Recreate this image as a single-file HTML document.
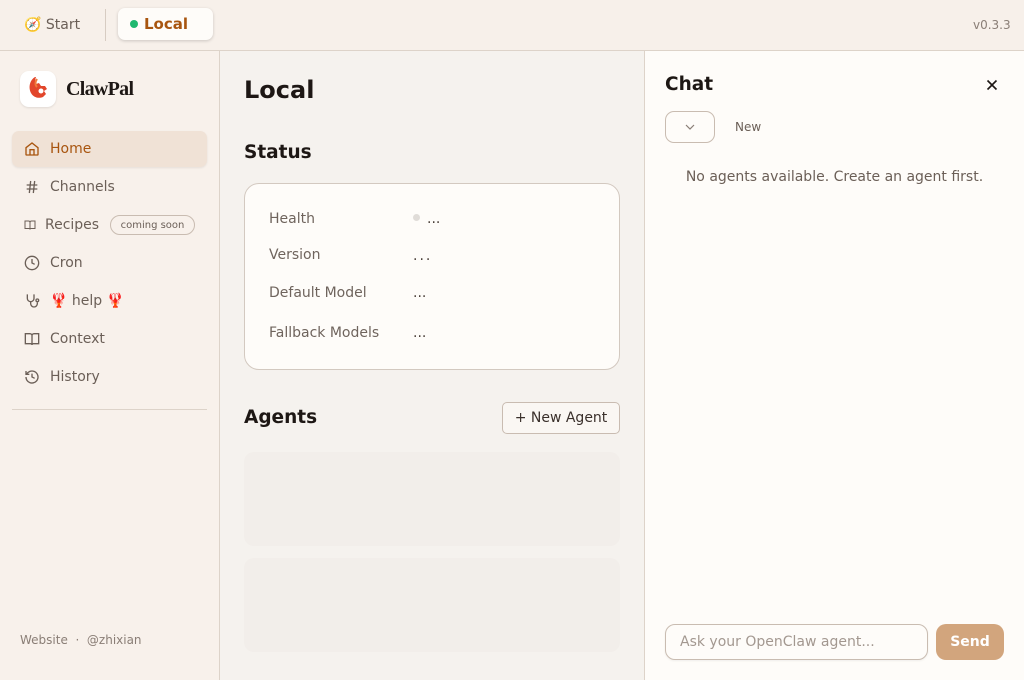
<!DOCTYPE html>
<html><head><meta charset="utf-8"><style>
*{box-sizing:border-box;margin:0;padding:0}
body{width:1024px;height:680px;overflow:hidden;font-family:"DejaVu Sans","Liberation Sans",sans-serif;background:#f5f2ee;color:#1d1714;position:relative}
.top{position:absolute;left:0;top:0;width:1024px;height:51px;background:#f7f0ea;border-bottom:1px solid #ddd3c9}
.abs{position:absolute}
.side{position:absolute;left:0;top:51px;width:220px;height:629px;background:#f8f1eb;border-right:1px solid #ddd3c9}
.main{position:absolute;left:220px;top:51px;width:425px;height:629px;background:#f5f2ee;border-right:1px solid #ddd3c9}
.chat{position:absolute;left:645px;top:51px;width:379px;height:629px;background:#fefcf9}
.nav{position:absolute;left:12px;width:195px;height:36px;display:flex;align-items:center;font-size:14px;color:#6b5f57}
.nav svg{position:absolute;left:12px}
.nav span{position:absolute;left:38px;top:10px}
.lbl{position:absolute;left:24px;font-size:14px;color:#6f645d}
.val{position:absolute;left:168px;font-size:14px;color:#4a3f39}
</style></head><body>
<div class="top">
  <div class="abs" style="left:24px;top:17px;font-size:14px;color:#6b5f57">🧭 Start</div>
  <div class="abs" style="left:105px;top:9px;width:1px;height:32px;background:#d7ccc2"></div>
  <div class="abs" style="left:118px;top:8px;width:95px;height:32px;background:#fefcf9;border-radius:7px;box-shadow:0 1px 3px rgba(0,0,0,.18)">
    <div class="abs" style="left:12px;top:12px;width:8px;height:8px;border-radius:50%;background:#1fb86f"></div>
    <div class="abs" style="left:26px;top:7px;font-size:15px;font-weight:bold;color:#a8550f">Local</div>
  </div>
  <div class="abs" style="left:973px;top:18px;font-size:12px;color:#8a7e76">v0.3.3</div>
</div>
<div class="side">
  <div class="abs" style="left:20px;top:20px;width:36px;height:36px;background:#fff;border-radius:9px;box-shadow:0 1px 2px rgba(0,0,0,.1)">
    <svg width="36" height="36" viewBox="0 0 36 36"><path d="M15 6c-5 3-7 10-4 16 2 4 7 6 12 4l3-3-2-3 3-2-2-3-4 0-2-3-3 1c-1-2-1-5 0-7z" fill="#e2462b"/><path d="M17 8c-2 3-2 6 0 8" stroke="#f07a3a" stroke-width="2" fill="none"/><circle cx="21" cy="20" r="2.5" fill="#fff"/></svg>
  </div>
  <div class="abs" style="left:66px;top:27px;font-family:'Liberation Serif',serif;font-weight:bold;font-size:20px;color:#1d1714;letter-spacing:-0.7px">ClawPal</div>
  <div class="nav" style="top:80px;background:#f0e2d6;border-radius:7px;box-shadow:0 1px 2px rgba(0,0,0,.08);color:#a8550f">
    <svg width="16" height="16" viewBox="0 0 24 24" fill="none" stroke="#a8550f" stroke-width="2"><path d="M3 10l9-7 9 7v10a1 1 0 0 1-1 1H4a1 1 0 0 1-1-1z"/><path d="M9 21v-8h6v8"/></svg><span>Home</span></div>
  <div class="nav" style="top:118px"><svg width="16" height="16" viewBox="0 0 24 24" fill="none" stroke="#6b5f57" stroke-width="2"><path d="M4 9h16M4 15h16M10 3L8 21M16 3l-2 18"/></svg><span>Channels</span></div>
  <div class="nav" style="top:156px"><svg width="12" height="12" viewBox="0 0 24 24" fill="none" stroke="#6b5f57" stroke-width="2"><path d="M2 4h7a3 3 0 0 1 3 3v14a2 2 0 0 0-2-2H2zM22 4h-7a3 3 0 0 0-3 3v14a2 2 0 0 1 2-2h8z"/></svg><span style="left:33px">Recipes</span>
    <div class="abs" style="left:98px;top:8px;width:85px;height:20px;border:1px solid #c9bcb1;border-radius:10px;font-size:10px;text-align:center;line-height:19px;color:#6b5f57">coming soon</div></div>
  <div class="nav" style="top:194px"><svg width="16" height="16" viewBox="0 0 24 24" fill="none" stroke="#6b5f57" stroke-width="2"><circle cx="12" cy="12" r="10"/><path d="M12 6v6l4 2"/></svg><span>Cron</span></div>
  <div class="nav" style="top:232px"><svg width="16" height="16" viewBox="0 0 24 24" fill="none" stroke="#6b5f57" stroke-width="2"><path d="M5 2v6a5 5 0 0 0 10 0V2M10 13v3a5 5 0 0 0 10 0v-2"/><circle cx="20" cy="11" r="2"/></svg><span>🦞 help 🦞</span></div>
  <div class="nav" style="top:270px"><svg width="16" height="16" viewBox="0 0 24 24" fill="none" stroke="#6b5f57" stroke-width="2"><path d="M2 4h7a3 3 0 0 1 3 3v14a2 2 0 0 0-2-2H2zM22 4h-7a3 3 0 0 0-3 3v14a2 2 0 0 1 2-2h8z"/></svg><span>Context</span></div>
  <div class="nav" style="top:308px"><svg width="16" height="16" viewBox="0 0 24 24" fill="none" stroke="#6b5f57" stroke-width="2"><path d="M3 12a9 9 0 1 0 3-6.7L3 8"/><path d="M3 3v5h5M12 7v5l4 2"/></svg><span>History</span></div>
  <div class="abs" style="left:12px;top:358px;width:195px;height:1px;background:#ddd3c9"></div>
  <div class="abs" style="left:20px;top:582px;font-size:12px;color:#8a7e76">Website &nbsp;·&nbsp; @zhixian</div>
</div>
<div class="main">
  <div class="abs" style="left:24px;top:25px;font-size:24px;font-weight:bold">Local</div>
  <div class="abs" style="left:24px;top:91px;font-size:18.5px;font-weight:bold">Status</div>
  <div class="abs" style="left:24px;top:132px;width:376px;height:187px;background:#fefcf9;border:1px solid #d3c9c0;border-radius:15px">
    <div class="lbl" style="top:27px">Health</div>
    <div class="val" style="top:27px"><span style="display:inline-block;width:7px;height:7px;border-radius:50%;background:#e0dcd8;margin-right:7px;vertical-align:2px"></span>...</div>
    <div class="lbl" style="top:63px">Version</div>
    <div class="val" style="top:64px;letter-spacing:2px">...</div>
    <div class="lbl" style="top:101px">Default Model</div>
    <div class="val" style="top:101px">...</div>
    <div class="lbl" style="top:141px">Fallback Models</div>
    <div class="val" style="top:141px">...</div>
  </div>
  <div class="abs" style="left:24px;top:356px;font-size:18.5px;font-weight:bold">Agents</div>
  <div class="abs" style="left:282px;top:351px;width:118px;height:32px;border:1px solid #c9bcb1;border-radius:5px;background:#faf7f3;font-size:14px;text-align:center;line-height:31px;color:#3a302b">+ New Agent</div>
  <div class="abs" style="left:24px;top:401px;width:376px;height:94px;background:#f2eeea;border-radius:10px"></div>
  <div class="abs" style="left:24px;top:507px;width:376px;height:94px;background:#f2eeea;border-radius:10px"></div>
</div>
<div class="chat">
  <div class="abs" style="left:20px;top:23px;font-size:18.5px;font-weight:bold">Chat</div>
  <svg class="abs" style="left:341px;top:28px" width="12" height="12" viewBox="0 0 12 12"><path d="M1.5 1.5l9 9M10.5 1.5l-9 9" stroke="#1d1714" stroke-width="1.6"/></svg>
  <div class="abs" style="left:20px;top:60px;width:50px;height:32px;border:1px solid #c9bcb1;border-radius:9px"><svg class="abs" style="left:18px;top:11px" width="12" height="8" viewBox="0 0 12 8"><path d="M2 2l4 4 4-4" fill="none" stroke="#8a7e76" stroke-width="1.2"/></svg></div>
  <div class="abs" style="left:90px;top:69px;font-size:12px;color:#6b5f57">New</div>
  <div class="abs" style="left:0;top:118px;width:379px;text-align:center;font-size:14px;color:#6b5f57">No agents available. Create an agent first.</div>
  <div class="abs" style="left:20px;top:573px;width:263px;height:36px;border:1px solid #c9bcb1;border-radius:10px;background:#fefcf9;box-shadow:0 1px 2px rgba(0,0,0,.06);font-size:14px;color:#a39890;line-height:35px;padding-left:14px">Ask your OpenClaw agent...</div>
  <div class="abs" style="left:291px;top:573px;width:68px;height:36px;border-radius:10px;background:#d2a57d;color:#fff;font-size:14px;font-weight:bold;text-align:center;line-height:37px">Send</div>
</div>
</body></html>
